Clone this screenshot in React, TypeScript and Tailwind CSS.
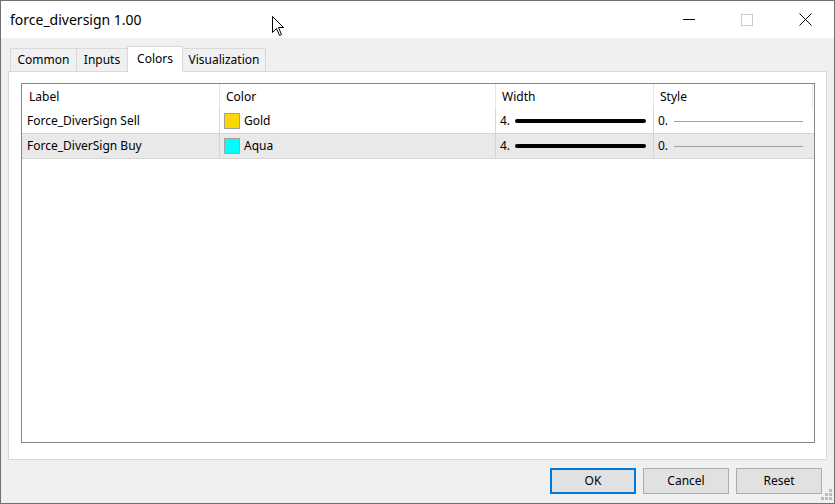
import React from "react";

const font = { fontFamily: '"Noto Sans", "Open Sans", sans-serif' };

const rows = [
  { label: "Force_DiverSign Sell", color: "#ffd700", name: "Gold", width: "4.", style: "0." },
  { label: "Force_DiverSign Buy", color: "#00ffff", name: "Aqua", width: "4.", style: "0." },
];

function Tab({ label, active, className }: { label: string; active?: boolean; className: string }) {
  if (active) {
    return (
      <div
        className={`relative z-10 -mb-px flex h-[26px] shrink-0 items-start justify-center border border-b-0 border-[#d9d9d9] bg-white pt-[3px] text-[12px] text-black ${className}`}
      >
        {label}
      </div>
    );
  }
  return (
    <div
      className={`flex h-[23px] shrink-0 items-center justify-center border border-b-0 border-[#d9d9d9] bg-[#f0f0f0] text-[12px] text-black ${className}`}
    >
      {label}
    </div>
  );
}

export default function App() {
  return (
    <div
      className="relative flex h-[504px] w-[835px] flex-col overflow-hidden border border-[#707070] bg-[#f0f0f0] select-none"
      style={font}
    >
      {/* title bar */}
      <div className="flex h-[37px] shrink-0 items-center bg-white">
        <div className="pl-[9px] text-[14px] text-black">force_diversign 1.00</div>
        <div className="ml-auto flex h-full items-center">
          <div className="flex h-full w-[58px] items-center justify-center">
            <div className="h-px w-[12px] bg-black" />
          </div>
          <div className="flex h-full w-[58px] items-center justify-center">
            <div className="h-[12px] w-[12px] border border-[#cccccc]" />
          </div>
          <div className="flex h-full w-[58px] items-center justify-center">
            <svg width="13" height="13" viewBox="0 0 13 13">
              <path d="M0.5 0.5 L12.5 12.5 M12.5 0.5 L0.5 12.5" stroke="#000" strokeWidth="1" fill="none" />
            </svg>
          </div>
        </div>
      </div>

      {/* body */}
      <div className="flex flex-1 flex-col px-[7px] pt-[8px]">
        <div className="flex h-[25px] items-end pl-[2px]">
          <Tab label="Common" className="w-[67px]" />
          <Tab label="Inputs" className="-ml-px w-[52px]" />
          <Tab label="Colors" active className="-ml-px w-[56px]" />
          <Tab label="Visualization" className="-ml-px w-[84px]" />
        </div>

        <div className="h-[389px] border border-[#d9d9d9] bg-white pl-[12px] pr-[11px] pt-[11px]">
          <div className="h-[360px] border border-[#828790] bg-white text-[12px] text-black">
            <div className="grid h-[25px] grid-cols-[198px_276px_158px_159px_1fr]">
              <div className="flex items-center border-r border-[#e5e5e5] pl-[7px]">Label</div>
              <div className="flex items-center border-r border-[#e5e5e5] pl-[6px]">Color</div>
              <div className="flex items-center border-r border-[#e5e5e5] pl-[6px]">Width</div>
              <div className="flex items-center border-r border-[#e5e5e5] pl-[6px]">Style</div>
              <div />
            </div>
            {rows.map((r, i) => (
              <div
                key={r.label}
                className={`grid h-[25px] grid-cols-[198px_276px_158px_159px_1fr] border-b border-[#d5d5d5] ${i === 1 ? "bg-[#e9e9e9]" : ""}`}
              >
                <div className="flex items-center border-r border-[#d5d5d5] pl-[5px]">{r.label}</div>
                <div className="flex items-center gap-[4px] border-r border-[#d5d5d5] pl-[4px]">
                  <div className="h-[16px] w-[16px] border border-[#a0a0a0]" style={{ background: r.color }} />
                  <span>{r.name}</span>
                </div>
                <div className="flex items-center border-r border-[#d5d5d5] pl-[4px]">
                  <span className="w-[15px]">{r.width}</span>
                  <div className="h-[4px] w-[131px] rounded-[2px] bg-black" />
                </div>
                <div className="flex items-center pl-[4px]">
                  <span className="w-[16px]">{r.style}</span>
                  <div className="h-px w-[129px] bg-[#a0a0a0]" />
                </div>
                <div />
              </div>
            ))}
          </div>
        </div>

        {/* buttons */}
        <div className="flex justify-end gap-[7px] pr-[5px] pt-[8px] text-[12px] text-black">
          <button className="flex h-[26px] w-[86px] items-center justify-center border-2 border-[#0078d7] bg-[#e1e1e1]">
            OK
          </button>
          <button className="flex h-[26px] w-[86px] items-center justify-center border border-[#adadad] bg-[#e1e1e1]">
            Cancel
          </button>
          <button className="flex h-[26px] w-[86px] items-center justify-center border border-[#adadad] bg-[#e1e1e1]">
            Reset
          </button>
        </div>
      </div>

      {/* size grip */}
      <div className="absolute bottom-[3px] right-[2px] grid grid-cols-3 gap-px">
        <div className="h-[3px] w-[3px]" />
        <div className="h-[3px] w-[3px]" />
        <div className="h-[3px] w-[3px] bg-[#bcbcbc]" />
        <div className="h-[3px] w-[3px]" />
        <div className="h-[3px] w-[3px] bg-[#bcbcbc]" />
        <div className="h-[3px] w-[3px] bg-[#bcbcbc]" />
        <div className="h-[3px] w-[3px] bg-[#bcbcbc]" />
        <div className="h-[3px] w-[3px] bg-[#bcbcbc]" />
        <div className="h-[3px] w-[3px] bg-[#bcbcbc]" />
      </div>

      {/* mouse pointer */}
      <svg className="absolute left-[270px] top-[14px]" width="14" height="22" viewBox="0 0 14 22">
        <path d="M1.5 1.5 L1.5 17.5 L5.5 13.5 L8.5 20.5 L10.5 19.5 L7.5 12.5 L12.5 12.5 Z" fill="#fff" stroke="#000" strokeWidth="1" strokeLinejoin="miter" />
      </svg>
    </div>
  );
}
